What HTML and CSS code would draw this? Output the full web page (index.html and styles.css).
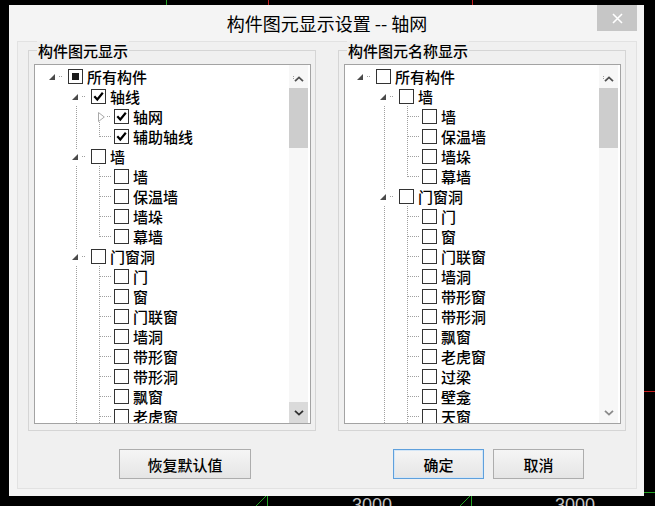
FILE: index.html
```html
<!DOCTYPE html>
<html lang="zh-CN">
<head>
<meta charset="utf-8">
<title>构件图元显示设置 -- 轴网</title>
<link rel="stylesheet" href="styles.css">
</head>
<body>
<svg class="cad" width="655" height="506" viewBox="0 0 655 506">
  <line x1="166.5" y1="0" x2="166.5" y2="6" stroke="#22a022"/>
  <line x1="268.5" y1="0" x2="268.5" y2="6" stroke="#c81e1e"/>
  <line x1="472.5" y1="0" x2="472.5" y2="6" stroke="#c81e1e"/>
  <line x1="644" y1="391.5" x2="655" y2="391.5" stroke="#c81e1e"/>
  <line x1="644" y1="492.5" x2="655" y2="492.5" stroke="#22a022"/>
  <line x1="267.5" y1="495" x2="267.5" y2="506" stroke="#22a022"/>
  <line x1="256" y1="506" x2="267" y2="495" stroke="#22a022"/>
  <line x1="471.5" y1="495" x2="471.5" y2="506" stroke="#22a022"/>
  <line x1="460" y1="506" x2="471" y2="495" stroke="#22a022"/>
  <text x="352" y="511" class="dim">3000</text>
  <text x="555" y="511" class="dim">3000</text>
</svg>

<div class="dlg">
  <div class="titlebar">
    <div class="title">构件图元显示设置 -- 轴网</div>
    <button class="close" aria-label="关闭"><svg width="11" height="11" viewBox="0 0 11 11"><path d="M1 1 10 10M10 1 1 10" stroke="#fff" stroke-width="1.6" fill="none"/></svg></button>
  </div>
  <div class="client">
    <div class="groups">
      <div class="group">
        <span class="legend">构件图元显示</span>
        <div class="list">
          <div class="tree">
            <div class="row"><i class="c op"><b class="tri"></b></i><span class="cb mix"></span><span class="t">所有构件</span></div>
            <div class="row"><i class="c"></i><i class="c op"><b class="tri"></b></i><span class="cb on"><svg viewBox="0 0 13 13"><path d="M2.3 6.3 5.3 9.5 10.8 2.8"/></svg></span><span class="t">轴线</span></div>
            <div class="row"><i class="c"></i><i class="c v"></i><i class="c cl dn"><svg width="7" height="10" viewBox="0 0 7 10"><path d="M.5 .5 6.3 5 .5 9.5z" fill="none" stroke="#a9a9a9"/></svg></i><span class="cb on"><svg viewBox="0 0 13 13"><path d="M2.3 6.3 5.3 9.5 10.8 2.8"/></svg></span><span class="t">轴网</span></div>
            <div class="row"><i class="c"></i><i class="c v"></i><i class="c end"></i><span class="cb on"><svg viewBox="0 0 13 13"><path d="M2.3 6.3 5.3 9.5 10.8 2.8"/></svg></span><span class="t">辅助轴线</span></div>
            <div class="row"><i class="c"></i><i class="c op up"><b class="tri"></b></i><span class="cb"></span><span class="t">墙</span></div>
            <div class="row"><i class="c"></i><i class="c v"></i><i class="c tee"></i><span class="cb"></span><span class="t">墙</span></div>
            <div class="row"><i class="c"></i><i class="c v"></i><i class="c tee"></i><span class="cb"></span><span class="t">保温墙</span></div>
            <div class="row"><i class="c"></i><i class="c v"></i><i class="c tee"></i><span class="cb"></span><span class="t">墙垛</span></div>
            <div class="row"><i class="c"></i><i class="c v"></i><i class="c end"></i><span class="cb"></span><span class="t">幕墙</span></div>
            <div class="row"><i class="c"></i><i class="c op up"><b class="tri"></b></i><span class="cb"></span><span class="t">门窗洞</span></div>
            <div class="row"><i class="c"></i><i class="c v"></i><i class="c tee"></i><span class="cb"></span><span class="t">门</span></div>
            <div class="row"><i class="c"></i><i class="c v"></i><i class="c tee"></i><span class="cb"></span><span class="t">窗</span></div>
            <div class="row"><i class="c"></i><i class="c v"></i><i class="c tee"></i><span class="cb"></span><span class="t">门联窗</span></div>
            <div class="row"><i class="c"></i><i class="c v"></i><i class="c tee"></i><span class="cb"></span><span class="t">墙洞</span></div>
            <div class="row"><i class="c"></i><i class="c v"></i><i class="c tee"></i><span class="cb"></span><span class="t">带形窗</span></div>
            <div class="row"><i class="c"></i><i class="c v"></i><i class="c tee"></i><span class="cb"></span><span class="t">带形洞</span></div>
            <div class="row"><i class="c"></i><i class="c v"></i><i class="c tee"></i><span class="cb"></span><span class="t">飘窗</span></div>
            <div class="row"><i class="c"></i><i class="c v"></i><i class="c tee"></i><span class="cb"></span><span class="t">老虎窗</span></div>
          </div>
          <div class="sb">
            <div class="arr up"><svg width="10" height="6" viewBox="0 0 10 6"><path d="M1 5.2 5 1.4 9 5.2" fill="none" stroke="#505050" stroke-width="1.8"/></svg></div>
            <div class="thumb"></div>
            <div class="fill"></div>
            <div class="arr dn hov"><svg width="10" height="6" viewBox="0 0 10 6"><path d="M1 .8 5 4.6 9 .8" fill="none" stroke="#303030" stroke-width="1.8"/></svg></div>
          </div>
        </div>
      </div>

      <div class="group">
        <span class="legend">构件图元名称显示</span>
        <div class="list">
          <div class="tree r">
            <div class="row"><i class="c op"><b class="tri"></b></i><span class="cb"></span><span class="t">所有构件</span></div>
            <div class="row"><i class="c"></i><i class="c op"><b class="tri"></b></i><span class="cb"></span><span class="t">墙</span></div>
            <div class="row"><i class="c"></i><i class="c v"></i><i class="c tee"></i><span class="cb"></span><span class="t">墙</span></div>
            <div class="row"><i class="c"></i><i class="c v"></i><i class="c tee"></i><span class="cb"></span><span class="t">保温墙</span></div>
            <div class="row"><i class="c"></i><i class="c v"></i><i class="c tee"></i><span class="cb"></span><span class="t">墙垛</span></div>
            <div class="row"><i class="c"></i><i class="c v"></i><i class="c end"></i><span class="cb"></span><span class="t">幕墙</span></div>
            <div class="row"><i class="c"></i><i class="c op up"><b class="tri"></b></i><span class="cb"></span><span class="t">门窗洞</span></div>
            <div class="row"><i class="c"></i><i class="c v"></i><i class="c tee"></i><span class="cb"></span><span class="t">门</span></div>
            <div class="row"><i class="c"></i><i class="c v"></i><i class="c tee"></i><span class="cb"></span><span class="t">窗</span></div>
            <div class="row"><i class="c"></i><i class="c v"></i><i class="c tee"></i><span class="cb"></span><span class="t">门联窗</span></div>
            <div class="row"><i class="c"></i><i class="c v"></i><i class="c tee"></i><span class="cb"></span><span class="t">墙洞</span></div>
            <div class="row"><i class="c"></i><i class="c v"></i><i class="c tee"></i><span class="cb"></span><span class="t">带形窗</span></div>
            <div class="row"><i class="c"></i><i class="c v"></i><i class="c tee"></i><span class="cb"></span><span class="t">带形洞</span></div>
            <div class="row"><i class="c"></i><i class="c v"></i><i class="c tee"></i><span class="cb"></span><span class="t">飘窗</span></div>
            <div class="row"><i class="c"></i><i class="c v"></i><i class="c tee"></i><span class="cb"></span><span class="t">老虎窗</span></div>
            <div class="row"><i class="c"></i><i class="c v"></i><i class="c tee"></i><span class="cb"></span><span class="t">过梁</span></div>
            <div class="row"><i class="c"></i><i class="c v"></i><i class="c tee"></i><span class="cb"></span><span class="t">壁龛</span></div>
            <div class="row"><i class="c"></i><i class="c v"></i><i class="c tee"></i><span class="cb"></span><span class="t">天窗</span></div>
          </div>
          <div class="sb">
            <div class="arr up"><svg width="10" height="6" viewBox="0 0 10 6"><path d="M1 5.2 5 1.4 9 5.2" fill="none" stroke="#505050" stroke-width="1.8"/></svg></div>
            <div class="thumb"></div>
            <div class="fill"></div>
            <div class="arr dn"><svg width="10" height="6" viewBox="0 0 10 6"><path d="M1 .8 5 4.6 9 .8" fill="none" stroke="#8a8a8a" stroke-width="1.8"/></svg></div>
          </div>
        </div>
      </div>
    </div>

    <div class="buttons">
      <button class="btn wide">恢复默认值</button>
      <button class="btn def">确定</button>
      <button class="btn cancel">取消</button>
    </div>
  </div>
</div>
</body>
</html>
```

FILE: styles.css
```css
* { box-sizing: border-box; }

html, body {
  margin: 0;
  width: 655px;
  height: 506px;
  overflow: hidden;
  background: #000;
}

body {
  position: relative;
  font-family: "Noto Sans CJK SC", "Noto Sans", sans-serif;
  font-weight: 500;
  color: #000;
}

.cad { position: absolute; left: 0; top: 0; }
.cad .dim { font-family: "Liberation Sans", sans-serif; font-weight: 400; font-size: 18px; fill: #c4c4c4; }

/* window on the desktop */
.dlg {
  position: absolute;
  left: 9px;
  top: 5px;
  width: 635px;
  height: 491px;
  background: #f4f4f4;
  padding: 0 7px 7px 8px;
  display: flex;
  flex-direction: column;
}

.titlebar {
  height: 36px;
  flex: none;
  display: grid;
  grid-template-columns: 1fr auto 1fr;
  align-items: center;
}

.title {
  grid-column: 2;
  font-size: 18px;
  font-weight: 400;
  line-height: 24px;
  white-space: nowrap;
  margin-top: -1px;
}

.close {
  grid-column: 3;
  justify-self: end;
  align-self: start;
  width: 40px;
  height: 26px;
  border: 0;
  padding: 0;
  background: #c6c6c6;
  display: flex;
  align-items: center;
  justify-content: center;
}

.client {
  flex: 1;
  background: #f0f0f0;
  border: 1px solid #e2e2e2;
  padding: 8px 0 0 10px;
}

.groups { display: flex; gap: 22px; }

.group {
  position: relative;
  width: 288px;
  height: 381px;
  border: 1px solid #d5d5d5;
  padding: 13px 4px 6px 5px;
}

.legend {
  position: absolute;
  left: 8px;
  top: -10px;
  padding: 0 1px;
  background: #f0f0f0;
  font-size: 15px;
  line-height: 20px;
  white-space: nowrap;
}

.list {
  display: flex;
  height: 100%;
  border: 1px solid #a3a3a3;
  background: #fff;
}

.tree {
  flex: 1;
  min-width: 0;
  overflow: hidden;
  padding: 1px 0 0 10px;
}
.tree.r { padding-left: 8px; }

.row {
  display: flex;
  align-items: center;
  height: 20px;
}

/* tree guide cells */
.c {
  position: relative;
  flex: none;
  width: 23px;
  height: 20px;
}
.c::before, .c::after { position: absolute; }

.v::before, .tee::before, .end::before, .up::before, .dn::before {
  content: "";
  left: 8px;
  width: 1px;
  background: repeating-linear-gradient(to bottom, #a0a0a0 0 1px, transparent 1px 2px);
}
.v::before, .tee::before { top: 0; bottom: 0; }
.end::before { top: 0; height: 11px; }
.up::before { top: 0; height: 3px; }
.dn::before { top: 16px; bottom: 0; }

.tee::after, .end::after, .op::after, .cl::after {
  content: "";
  top: 10px;
  height: 1px;
  background: repeating-linear-gradient(to right, #a0a0a0 0 1px, transparent 1px 2px);
}
.tee::after, .end::after { left: 9px; width: 12px; }
.op::after { left: 14px; width: 3px; }
.cl::after { left: 16px; width: 3px; }

.tri {
  position: absolute;
  left: 4px;
  top: 8px;
  width: 0;
  height: 0;
  border-left: 6px solid transparent;
  border-bottom: 6px solid #4a4a4a;
}
.cl svg { position: absolute; left: 7px; top: 6px; }

/* check boxes */
.cb {
  position: relative;
  flex: none;
  width: 15px;
  height: 15px;
  border: 1px solid #333;
  background: #fff;
}
.cb svg {
  position: absolute;
  left: 0;
  top: 0;
  width: 13px;
  height: 13px;
  fill: none;
  stroke: #000;
  stroke-width: 2.2;
}
.cb.mix::after {
  content: "";
  position: absolute;
  left: 3px;
  top: 3px;
  width: 7px;
  height: 7px;
  background: #1a1a1a;
}

.t {
  margin-left: 4px;
  font-size: 15px;
  line-height: 20px;
  white-space: nowrap;
  position: relative;
  top: 1px;
}

/* scroll bar */
.sb {
  flex: none;
  width: 19px;
  margin-right: 2px;
  background: #f7f7f7;
  display: flex;
  flex-direction: column;
}
.arr {
  display: flex;
  justify-content: center;
  align-items: center;
  height: 21px;
}
.arr.up { height: 23px; align-items: flex-start; padding-top: 11px; }
.arr.hov { background: #dadada; }
.thumb { height: 60px; background: #cdcdcd; }
.fill { flex: 1; }

/* buttons */
.buttons {
  display: flex;
  margin-top: 18px;
  padding-left: 91px;
}
.btn {
  width: 91px;
  height: 30px;
  padding: 0;
  border: 1px solid #adadad;
  background: linear-gradient(#f5f5f5, #e5e5e5);
  font-family: "Noto Sans CJK SC", "Noto Sans", sans-serif;
  font-weight: 500;
  font-size: 15px;
  color: #000;
}
.btn.wide { width: 132px; margin-right: 142px; }
.btn.def { border-color: #5fa0dc; box-shadow: inset 0 0 0 1px #d3e6f7; }
.btn.cancel { margin-left: 9px; }
```
